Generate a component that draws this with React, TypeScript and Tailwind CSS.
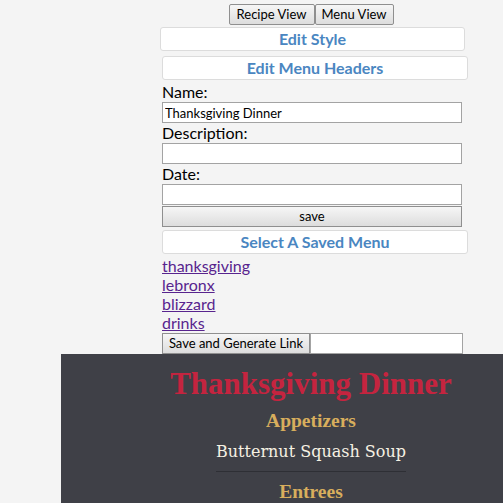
import { useState } from "react";

const savedMenus = ["thanksgiving", "lebronx", "blizzard", "drinks"];

function App() {
  const [name, setName] = useState("Thanksgiving Dinner");
  const [description, setDescription] = useState("");
  const [date, setDate] = useState("");

  return (
    <div className="w-[503px] h-[503px] overflow-hidden bg-[#f4f4f4] font-['Lato','Liberation_Sans',sans-serif] text-black">
      <div className="ml-[61px] w-[500px] flex flex-col">
        {/* 보기 전환 버튼 */}
        <div className="flex justify-center pt-[4px]">
          <button className="h-[21px] w-[86px] border border-[#8f8f8f] rounded-[2px] bg-gradient-to-b from-[#f6f6f6] to-[#dddddd] text-[13px] leading-none">
            Recipe View
          </button>
          <button className="h-[21px] w-[79px] border border-[#8f8f8f] rounded-[2px] bg-gradient-to-b from-[#f6f6f6] to-[#dddddd] text-[13px] leading-none">
            Menu View
          </button>
        </div>

        <div className="ml-[100px] w-[300px] flex flex-col">
          <div className="mt-[2px] -ml-[1px] w-[305px] h-[24px] flex items-center justify-center bg-white border border-[#dcdcdc] rounded-[3px] text-[#4a86c1] font-bold text-[16px]">
            Edit Style
          </div>
          <div className="mt-[5px] ml-[1px] w-[306px] h-[24px] flex items-center justify-center bg-white border border-[#dcdcdc] rounded-[3px] text-[#4a86c1] font-bold text-[16px]">
            Edit Menu Headers
          </div>

          {/* 메뉴 정보 입력 */}
          <div className="mt-[2px] ml-[1px] flex flex-col">
            <label className="text-[16px] leading-[20px]">Name:</label>
            <input
              className="w-[300px] h-[21px] bg-white border border-[#a3a3a3] px-[2px] text-[13px] outline-none"
              type="text"
              value={name}
              onChange={(e) => setName(e.target.value)}
            />
            <label className="text-[16px] leading-[20px]">Description:</label>
            <input
              className="w-[300px] h-[21px] bg-white border border-[#a3a3a3] px-[2px] text-[13px] outline-none"
              type="text"
              value={description}
              onChange={(e) => setDescription(e.target.value)}
            />
            <label className="text-[16px] leading-[20px]">Date:</label>
            <input
              className="w-[300px] h-[21px] bg-white border border-[#a3a3a3] px-[2px] text-[13px] outline-none"
              type="text"
              value={date}
              onChange={(e) => setDate(e.target.value)}
            />
            <button className="mt-[1px] w-[300px] h-[21px] border border-[#8f8f8f] bg-gradient-to-b from-[#f6f6f6] to-[#dddddd] text-[13px] leading-none">
              save
            </button>
          </div>

          <div className="mt-[3px] ml-[1px] w-[306px] h-[24px] flex items-center justify-center bg-white border border-[#dcdcdc] rounded-[3px] text-[#4a86c1] font-bold text-[16px]">
            Select A Saved Menu
          </div>

          {/* 저장된 메뉴 목록 */}
          <div className="mt-[2px] ml-[1px] flex flex-col items-start">
            {savedMenus.map((menu) => (
              <a key={menu} href="#" className="text-[16px] leading-[19px] text-[#58248e] underline">
                {menu}
              </a>
            ))}
          </div>

          <div className="mt-[1px] ml-[1px] flex">
            <button className="shrink-0 h-[21px] w-[148px] border border-[#8f8f8f] bg-gradient-to-b from-[#f6f6f6] to-[#dddddd] text-[13px] leading-none">
              Save and Generate Link
            </button>
            <input className="shrink-0 h-[21px] w-[153px] bg-white border border-[#a3a3a3] outline-none" type="text" />
          </div>
        </div>

        {/* 메뉴 미리보기 */}
        <div className="h-[160px] bg-[#3f4047] flex flex-col items-center">
          <div className="mt-[12px] text-[#c5243f] font-bold text-[31px] leading-[36px] font-['Liberation_Serif',serif]">
            Thanksgiving Dinner
          </div>
          <div className="mt-[7px] text-[#d8ae5d] font-bold text-[19.5px] leading-[24px] font-['Liberation_Serif',serif]">
            Appetizers
          </div>
          <div className="mt-[7px] text-[#f6f1e3] text-[16px] leading-[24px] font-['DejaVu_Serif',serif]">
            Butternut Squash Soup
          </div>
          <div className="mt-[7px] w-[190px] h-[1px] bg-[#2e2f35]"></div>
          <div className="mt-[8px] text-[#d8ae5d] font-bold text-[19.5px] leading-[24px] font-['Liberation_Serif',serif]">
            Entrees
          </div>
        </div>
      </div>
    </div>
  );
}

export default App;
